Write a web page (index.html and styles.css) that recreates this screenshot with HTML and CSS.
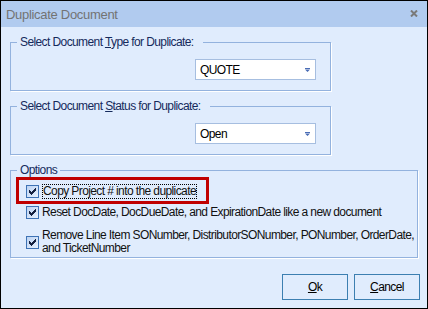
FILE: index.html
```html
<!DOCTYPE html>
<html lang="en">
  <head>
    <meta charset="utf-8">
    <title>Duplicate Document</title>
    <link rel="stylesheet" href="styles.css">
  </head>
  <body>
    <div class="window">
      <div class="titlebar">
        <span class="title">Duplicate Document</span>
        <svg class="close" width="8" height="7" viewBox="0 0 8 7">
          <path d="M1 0.5L7 6.5M7 0.5L1 6.5" stroke="#7a7a7a" stroke-width="2"/>
        </svg>
      </div>
      <div class="content">
        <fieldset class="group">
          <legend class="trail">Select Document <u>T</u>ype for Duplicate:</legend>
          <div class="row">
            <div class="combo">
              <span>QUOTE</span>
              <svg width="5" height="4" viewBox="0 0 5 4"><path d="M0 0h5v1H0z M0 1.5h5L2.5 4z" fill="#4a6db5"/></svg>
            </div>
          </div>
        </fieldset>

        <fieldset class="group next">
          <legend class="trail">Select Document <u>S</u>tatus for Duplicate:</legend>
          <div class="row">
            <div class="combo">
              <span>Open</span>
              <svg width="5" height="4" viewBox="0 0 5 4"><path d="M0 0h5v1H0z M0 1.5h5L2.5 4z" fill="#4a6db5"/></svg>
            </div>
          </div>
        </fieldset>

        <fieldset class="group next options">
          <legend>Options</legend>
          <div class="mark">
            <div class="option">
              <span class="check"><svg width="11" height="11" viewBox="0 0 11 11" shape-rendering="crispEdges"><path d="M2 4h1v3H2z M3 5h1v3H3z M4 6h1v3H4z M5 5h1v3H5z M6 4h1v3H6z M7 3h1v3H7z M8 2h1v3H8z" fill="#16213f"/></svg></span>
              <span class="label focus">Copy Project # into the duplicate</span>
            </div>
          </div>
          <div class="option plain">
            <span class="check"><svg width="11" height="11" viewBox="0 0 11 11" shape-rendering="crispEdges"><path d="M2 4h1v3H2z M3 5h1v3H3z M4 6h1v3H4z M5 5h1v3H5z M6 4h1v3H6z M7 3h1v3H7z M8 2h1v3H8z" fill="#16213f"/></svg></span>
            <span class="label">Reset DocDate, DocDueDate, and ExpirationDate like a new document</span>
          </div>
          <div class="option plain wrap">
            <span class="check"><svg width="11" height="11" viewBox="0 0 11 11" shape-rendering="crispEdges"><path d="M2 4h1v3H2z M3 5h1v3H3z M4 6h1v3H4z M5 5h1v3H5z M6 4h1v3H6z M7 3h1v3H7z M8 2h1v3H8z" fill="#16213f"/></svg></span>
            <span class="label">Remove Line Item SONumber, DistributorSONumber, PONumber, OrderDate,<br>and TicketNumber</span>
          </div>
        </fieldset>

        <div class="buttons">
          <button class="button"><u>O</u>k</button>
          <button class="button"><u>C</u>ancel</button>
        </div>
      </div>
    </div>
  </body>
</html>
```

FILE: styles.css
```css
html, body {
  margin: 0;
  padding: 0;
}
body {
  background: #fff;
  font-family: "Liberation Sans", Arial, sans-serif;
  font-size: 12px;
  letter-spacing: -0.6px;
  color: #000;
}
.window {
  box-sizing: border-box;
  width: 428px;
  height: 309px;
  border: 1px solid #000;
  background: #e0ecfd;
}
.titlebar {
  height: 26px;
  display: flex;
  align-items: center;
  justify-content: space-between;
  padding: 0 9px 0 5px;
  background: #b1cbef;
}
.title {
  font-size: 13px;
  letter-spacing: -0.3px;
  color: #737373;
}
.close {
  display: block;
  margin-top: -2px;
}
.content {
  padding: 8px 0 0 9px;
}
.group {
  box-sizing: border-box;
  width: 321px;
  margin: 0;
  padding: 0 0 10px 0;
  min-width: 0;
  border: 1px solid #93b2de;
  box-shadow: 1px 1px 0 #fff;
}
.group.next {
  margin-top: 8px;
}
legend {
  margin-left: 6px;
  padding: 0 3px;
  line-height: 14px;
  color: #152a5c;
}
legend.trail {
  padding-right: 9px;
}
.row {
  display: flex;
  justify-content: flex-end;
  padding: 10px 14px 0 0;
}
.combo {
  box-sizing: border-box;
  width: 121px;
  height: 21px;
  display: flex;
  align-items: center;
  justify-content: space-between;
  padding: 0 5px 0 4px;
  background: #fff;
  border: 1px solid #a6bee0;
}
.combo svg {
  display: block;
  margin-top: 1px;
}
.options {
  width: 408px;
  padding-bottom: 2px;
}
.mark {
  width: 193px;
  height: 27px;
  box-sizing: border-box;
  margin-left: 5px;
  padding: 4px 0 0 7px;
  border: 3px solid #c00000;
}
.option {
  display: flex;
  align-items: center;
  line-height: 15px;
}
.option.plain {
  padding-left: 15px;
  margin-top: 1px;
}
.option.wrap {
  margin-top: 9px;
  line-height: 13px;
}
.label {
  white-space: nowrap;
  color: #111;
}
.check {
  box-sizing: border-box;
  width: 13px;
  height: 13px;
  flex: none;
  margin-right: 3px;
  border: 1px solid #3f73b5;
  background: linear-gradient(to bottom right, #bcd3f3, #e8f1fd);
}
.check svg {
  display: block;
}
.label.focus {
  outline: 1px dotted #000;
  outline-offset: -1px;
  padding: 0 1px;
}
.buttons {
  display: flex;
  justify-content: flex-end;
  gap: 6px;
  margin-top: 16px;
  padding-right: 7px;
}
.button {
  width: 66px;
  height: 26px;
  padding: 0;
  background: #e0ecfd;
  border: 1px solid #3c7fb1;
  font-family: inherit;
  font-size: 12px;
  letter-spacing: -0.6px;
  color: #000;
}
```
